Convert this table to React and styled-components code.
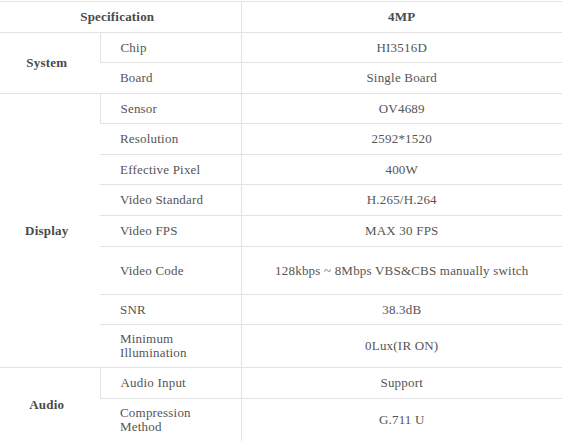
import React from "react";
import styled, { createGlobalStyle } from "styled-components";

const Global = createGlobalStyle`
  html, body { margin: 0; padding: 0; background: #fff; }
  body { font-family: "Liberation Serif", "Times New Roman", serif; overflow: hidden; }
`;

const Table = styled.table`
  border-collapse: collapse;
  table-layout: fixed;
  width: 568px;
  margin: 1px 0 0 -6px;
  font-family: "Liberation Serif", "Times New Roman", serif;
  font-size: 13px;
  letter-spacing: 0.2px;
  color: #555;
  border-top: 1px solid #e2e2e2;
`;

const Row = styled.tr`
  height: ${(p) => p.$h || 31}px;
`;

const Cell = styled.td`
  font-family: "Liberation Serif", "Times New Roman", serif;
  border-bottom: 1px solid #e2e2e2;
  border-left: 1px solid #e2e2e2;
  padding: 0 20px;
  line-height: 14px;
  vertical-align: middle;
  text-align: ${(p) => (p.$center ? "center" : "left")};
  &:first-child { border-left: none; }
`;

const Group = styled(Cell)`
  font-weight: bold;
  color: #4a4a4a;
  text-align: center;
  padding: 0;
`;

const Head = styled(Cell)`
  font-weight: bold;
  color: #4a4a4a;
  text-align: center;
`;

const groups = [
  {
    name: "System",
    rows: [
      ["Chip", "HI3516D", 30],
      ["Board", "Single Board", 31],
    ],
  },
  {
    name: "Display",
    rows: [
      ["Sensor", "OV4689", 30],
      ["Resolution", "2592*1520", 31],
      ["Effective Pixel", "400W", 30],
      ["Video Standard", "H.265/H.264", 31],
      ["Video FPS", "MAX 30 FPS", 31],
      ["Video Code", "128kbps ~ 8Mbps VBS&CBS manually switch", 48],
      ["SNR", "38.3dB", 30],
      [["Minimum", "Illumination"], "0Lux(IR ON)", 43],
    ],
  },
  {
    name: "Audio",
    rows: [
      ["Audio Input", "Support", 31],
      [["Compression", "Method"], "G.711 U", 43],
    ],
  },
];

const Label = ({ v }) =>
  Array.isArray(v) ? (
    <>
      {v[0]}
      <br />
      {v[1]}
    </>
  ) : (
    v
  );

export default function App() {
  return (
    <>
      <Global />
      <Table>
        <colgroup>
          <col style={{ width: 106 }} />
          <col style={{ width: 141 }} />
          <col style={{ width: 321 }} />
        </colgroup>
        <tbody>
          <Row $h={31}>
            <Head colSpan={2}>Specification</Head>
            <Head>4MP</Head>
          </Row>
          {groups.map((g) =>
            g.rows.map((r, i) => (
              <Row key={g.name + i} $h={r[2]}>
                {i === 0 && <Group rowSpan={g.rows.length}>{g.name}</Group>}
                <Cell>
                  <Label v={r[0]} />
                </Cell>
                <Cell $center>{r[1]}</Cell>
              </Row>
            ))
          )}
        </tbody>
      </Table>
    </>
  );
}
